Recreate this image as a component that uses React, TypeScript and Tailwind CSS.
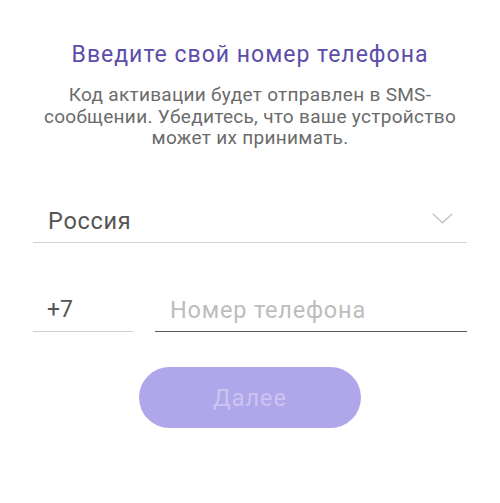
export default function App() {
  return (
    <div className="w-[500px] h-[503px] bg-white font-['Roboto','Noto_Sans',sans-serif] overflow-hidden">
      <div className="px-[33px] pt-[40px]">
        <h1 className="text-center text-[23px] leading-[30px] tracking-[1px] text-[#5b4eaa]">
          Введите свой номер телефона
        </h1>
        <p className="mt-[14px] mx-auto w-[420px] text-center text-[19px] leading-[21.5px] tracking-[0.3px] text-[#6b6b6b]">
          Код активации будет отправлен в SMS-сообщении. Убедитесь, что ваше устройство может их принимать.
        </p>

        <div className="mt-[54px] flex items-center h-[40px] border-b border-[#d2d2d2] pl-[15px] pr-[14px]">
          <span className="flex-1 text-[23.5px] tracking-[0.7px] text-[#555555]">Россия</span>
          <svg width="21" height="11" viewBox="0 0 21 11" className="mb-[8px]">
            <path d="M0.7 0.7 L10.5 9.8 L20.3 0.7" fill="none" stroke="#c4c4c4" strokeWidth="1.4" />
          </svg>
        </div>

        <div className="mt-[48px] flex gap-[22px]">
          <div className="w-[100px] h-[41px] border-b border-[#cfcfcf] pl-[14px] flex items-center text-[23px] text-[#555555]">
            +7
          </div>
          <div className="flex-1 h-[41px] border-b border-[#5a5a5a] pl-[15px] flex items-center text-[23.5px] tracking-[0.8px] text-[#bdbdbd]">
            Номер телефона
          </div>
        </div>

        <div className="mt-[35px] flex justify-center">
          <button className="w-[222px] h-[61px] pt-[4px] rounded-full bg-[#b0a6ea] text-[23.5px] tracking-[1px] text-[#cbc5f1]">
            Далее
          </button>
        </div>
      </div>
    </div>
  );
}
